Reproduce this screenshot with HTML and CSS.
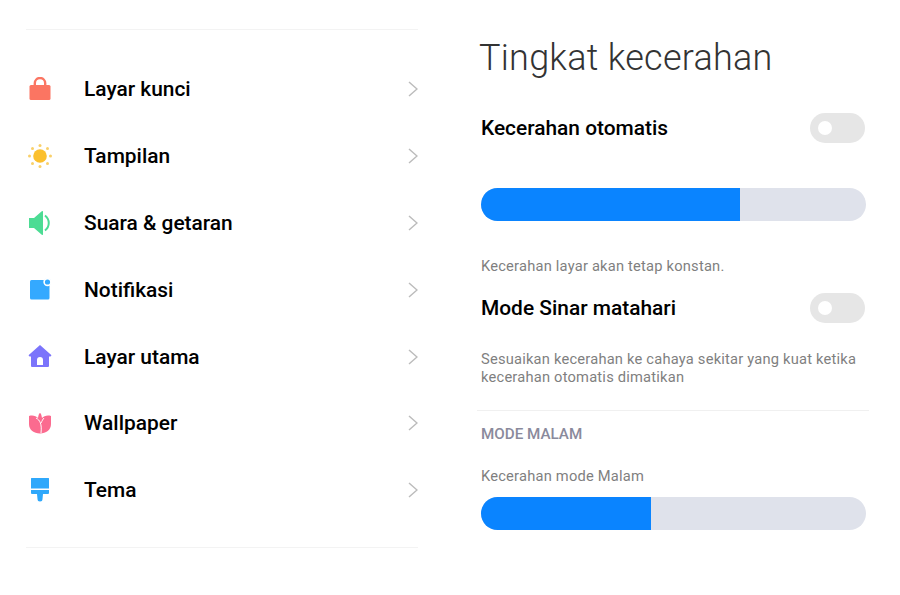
FILE: index.html
```html
<!DOCTYPE html>
<html lang="id">
<head>
  <meta charset="UTF-8">
  <title>Pengaturan</title>
  <link rel="stylesheet" href="styles.css">
</head>
<body>
  <div class="page">
    <div class="menu">
      <div class="row">
        <svg class="icon" viewBox="0 0 24 24"><path fill="none" stroke="#fb7562" stroke-width="2.4" d="M6.800 10V6.200a5.200 5.200 0 0 1 10.400 0V10"/><rect x="1.500" y="8" width="21" height="15" rx="1.500" fill="#fb7562"/></svg>
        <span class="label">Layar kunci</span>
        <svg class="chev" viewBox="0 0 10 16"><path d="M1 1l8 7-8 7"/></svg>
      </div>
      <div class="row">
        <svg class="icon" viewBox="0 0 24 24"><circle cx="12" cy="12" r="6.800" fill="#fbc02f"/><g fill="#f9d06a"><circle cx="12" cy="1.500" r="1.500"/><circle cx="12" cy="22.500" r="1.500"/><circle cx="1.500" cy="12" r="1.500"/><circle cx="22.500" cy="12" r="1.500"/><circle cx="4.500" cy="4.500" r="1.500"/><circle cx="19.500" cy="4.500" r="1.500"/><circle cx="4.500" cy="19.500" r="1.500"/><circle cx="19.500" cy="19.500" r="1.500"/></g></svg>
        <span class="label">Tampilan</span>
        <svg class="chev" viewBox="0 0 10 16"><path d="M1 1l8 7-8 7"/></svg>
      </div>
      <div class="row">
        <svg class="icon" viewBox="0 0 24 24"><path fill="#4cdc94" d="M1 7h5l7.500-6.500a.8.8 0 0 1 1.500.5v22a.8.8 0 0 1-1.500.5L6 17H1z"/><path fill="none" stroke="#4cdc94" stroke-width="2" d="M17 4.500c5 4 5 11 0 15"/></svg>
        <span class="label">Suara &amp; getaran</span>
        <svg class="chev" viewBox="0 0 10 16"><path d="M1 1l8 7-8 7"/></svg>
      </div>
      <div class="row">
        <svg class="icon" viewBox="0 0 24 24"><rect x="2" y="2" width="19.500" height="19.500" rx="1.500" fill="#34a9ff"/><circle cx="19.500" cy="4" r="3.400" fill="#34a9ff" stroke="#fff" stroke-width="1.600"/></svg>
        <span class="label">Notifikasi</span>
        <svg class="chev" viewBox="0 0 10 16"><path d="M1 1l8 7-8 7"/></svg>
      </div>
      <div class="row">
        <svg class="icon" viewBox="0 0 24 24"><path fill="#7b74fb" fill-rule="evenodd" d="M12 0l11.500 10.200-1 1.300H21V21a1 1 0 0 1-1 1H4a1 1 0 0 1-1-1v-9.500H1.500l-1-1.300zM9 15v5h6v-5a3 3 0 0 0-6 0z"/></svg>
        <span class="label">Layar utama</span>
        <svg class="chev" viewBox="0 0 10 16"><path d="M1 1l8 7-8 7"/></svg>
      </div>
      <div class="row">
        <svg class="icon" viewBox="0 0 24 24"><path fill="#fb6b8f" d="M1 5c4-1 7 0 9 2 .5-3 1-4.500 2-5 1 .5 1.500 2 2 5 2-2 5-3 9-2v8c0 6-5 9.500-11 9.500S1 19 1 13z"/><path fill="none" stroke="#fff" stroke-width="1" d="M8 7c4 2 6 6 5 15M16 7c-1 1-2 3-3 5"/></svg>
        <span class="label">Wallpaper</span>
        <svg class="chev" viewBox="0 0 10 16"><path d="M1 1l8 7-8 7"/></svg>
      </div>
      <div class="row">
        <svg class="icon" viewBox="0 0 24 24"><path fill="#2fa8fb" d="M3.500 0h17a.5.500 0 0 1 .5.500V10.500H3V.5a.5.500 0 0 1 .5-.5zM3 12h18v3a1 1 0 0 1-1 1h-5l-.5 5a2.500 2.500 0 0 1-5 0L9 16H4a1 1 0 0 1-1-1z"/></svg>
        <span class="label">Tema</span>
        <svg class="chev" viewBox="0 0 10 16"><path d="M1 1l8 7-8 7"/></svg>
      </div>
    </div>

    <div class="detail">
      <h1>Tingkat kecerahan</h1>
      <div class="setting first">
        <span class="label">Kecerahan otomatis</span>
        <span class="toggle"></span>
      </div>
      <div class="slider"><div class="fill fill-auto"></div></div>
      <p class="note one">Kecerahan layar akan tetap konstan.</p>
      <div class="setting">
        <span class="label">Mode Sinar matahari</span>
        <span class="toggle"></span>
      </div>
      <p class="note two">Sesuaikan kecerahan ke cahaya sekitar yang kuat ketika kecerahan otomatis dimatikan</p>
      <div class="section">
        <h2>MODE MALAM</h2>
        <p class="note three">Kecerahan mode Malam</p>
        <div class="slider"><div class="fill fill-night"></div></div>
      </div>
    </div>
  </div>
</body>
</html>
```

FILE: styles.css
```css
* {
  box-sizing: border-box;
}

body {
  margin: 0;
  background: #fff;
  font-family: Roboto, sans-serif;
  color: #000;
}

.page {
  display: flex;
  align-items: flex-start;
  width: 900px;
  height: 595px;
  overflow: hidden;
}

.menu {
  width: 392px;
  height: 519px;
  margin: 29px 0 0 26px;
  padding-top: 26px;
  border-top: 1px solid #f3f3f3;
  border-bottom: 1px solid #f3f3f3;
}

.row {
  display: flex;
  align-items: center;
  height: 66.800px;
}

.icon {
  width: 24px;
  height: 24px;
  margin-left: 2px;
  flex-shrink: 0;
}

.label {
  font-size: 20.900px;
  font-weight: 500;
  line-height: 24px;
}

.row .label {
  flex: 1;
  margin-left: 32px;
}

.chev {
  width: 10px;
  height: 16px;
}

.chev path {
  fill: none;
  stroke: #bcbcbc;
  stroke-width: 1.500;
}

.detail {
  width: 392px;
  margin-left: 59px;
}

h1 {
  margin: 36px 0 0 2px;
  font-size: 36px;
  font-weight: 300;
  line-height: 44px;
  letter-spacing: 0.250px;
  color: #333;
}

.setting {
  display: flex;
  justify-content: space-between;
  align-items: center;
  height: 32px;
  padding: 0 4px;
}

.setting.first {
  margin-top: 32px;
}

.toggle {
  position: relative;
  width: 55px;
  height: 30px;
  border-radius: 15px;
  background: #e6e6e6;
}

.toggle::after {
  content: "";
  position: absolute;
  left: 8px;
  top: 8px;
  width: 14px;
  height: 14px;
  border-radius: 50%;
  background: #fff;
}

.slider {
  width: 385px;
  height: 33px;
  margin-left: 4px;
  border-radius: 17px;
  background: #dfe2eb;
  overflow: hidden;
}

.setting + .slider {
  margin-top: 44px;
}

.fill {
  height: 100%;
  background: #0a84ff;
}

.fill-auto {
  width: 259px;
}

.fill-night {
  width: 170px;
}

.note {
  margin: 0 0 0 4px;
  font-size: 14.700px;
  line-height: 18px;
  letter-spacing: 0.200px;
  color: #7f7f7f;
}

.note.one {
  margin-top: 36px;
  margin-bottom: 17px;
}

.note.two {
  margin-top: 26px;
  width: 385px;
}

.section {
  margin-top: 24px;
  padding-top: 14px;
  border-top: 1px solid #f0f0f0;
}

h2 {
  margin: 0 0 0 4px;
  font-size: 15.200px;
  font-weight: 500;
  line-height: 18px;
  color: #8a8a9c;
}

.note.three {
  margin-top: 24px;
  margin-bottom: 12px;
}
```
